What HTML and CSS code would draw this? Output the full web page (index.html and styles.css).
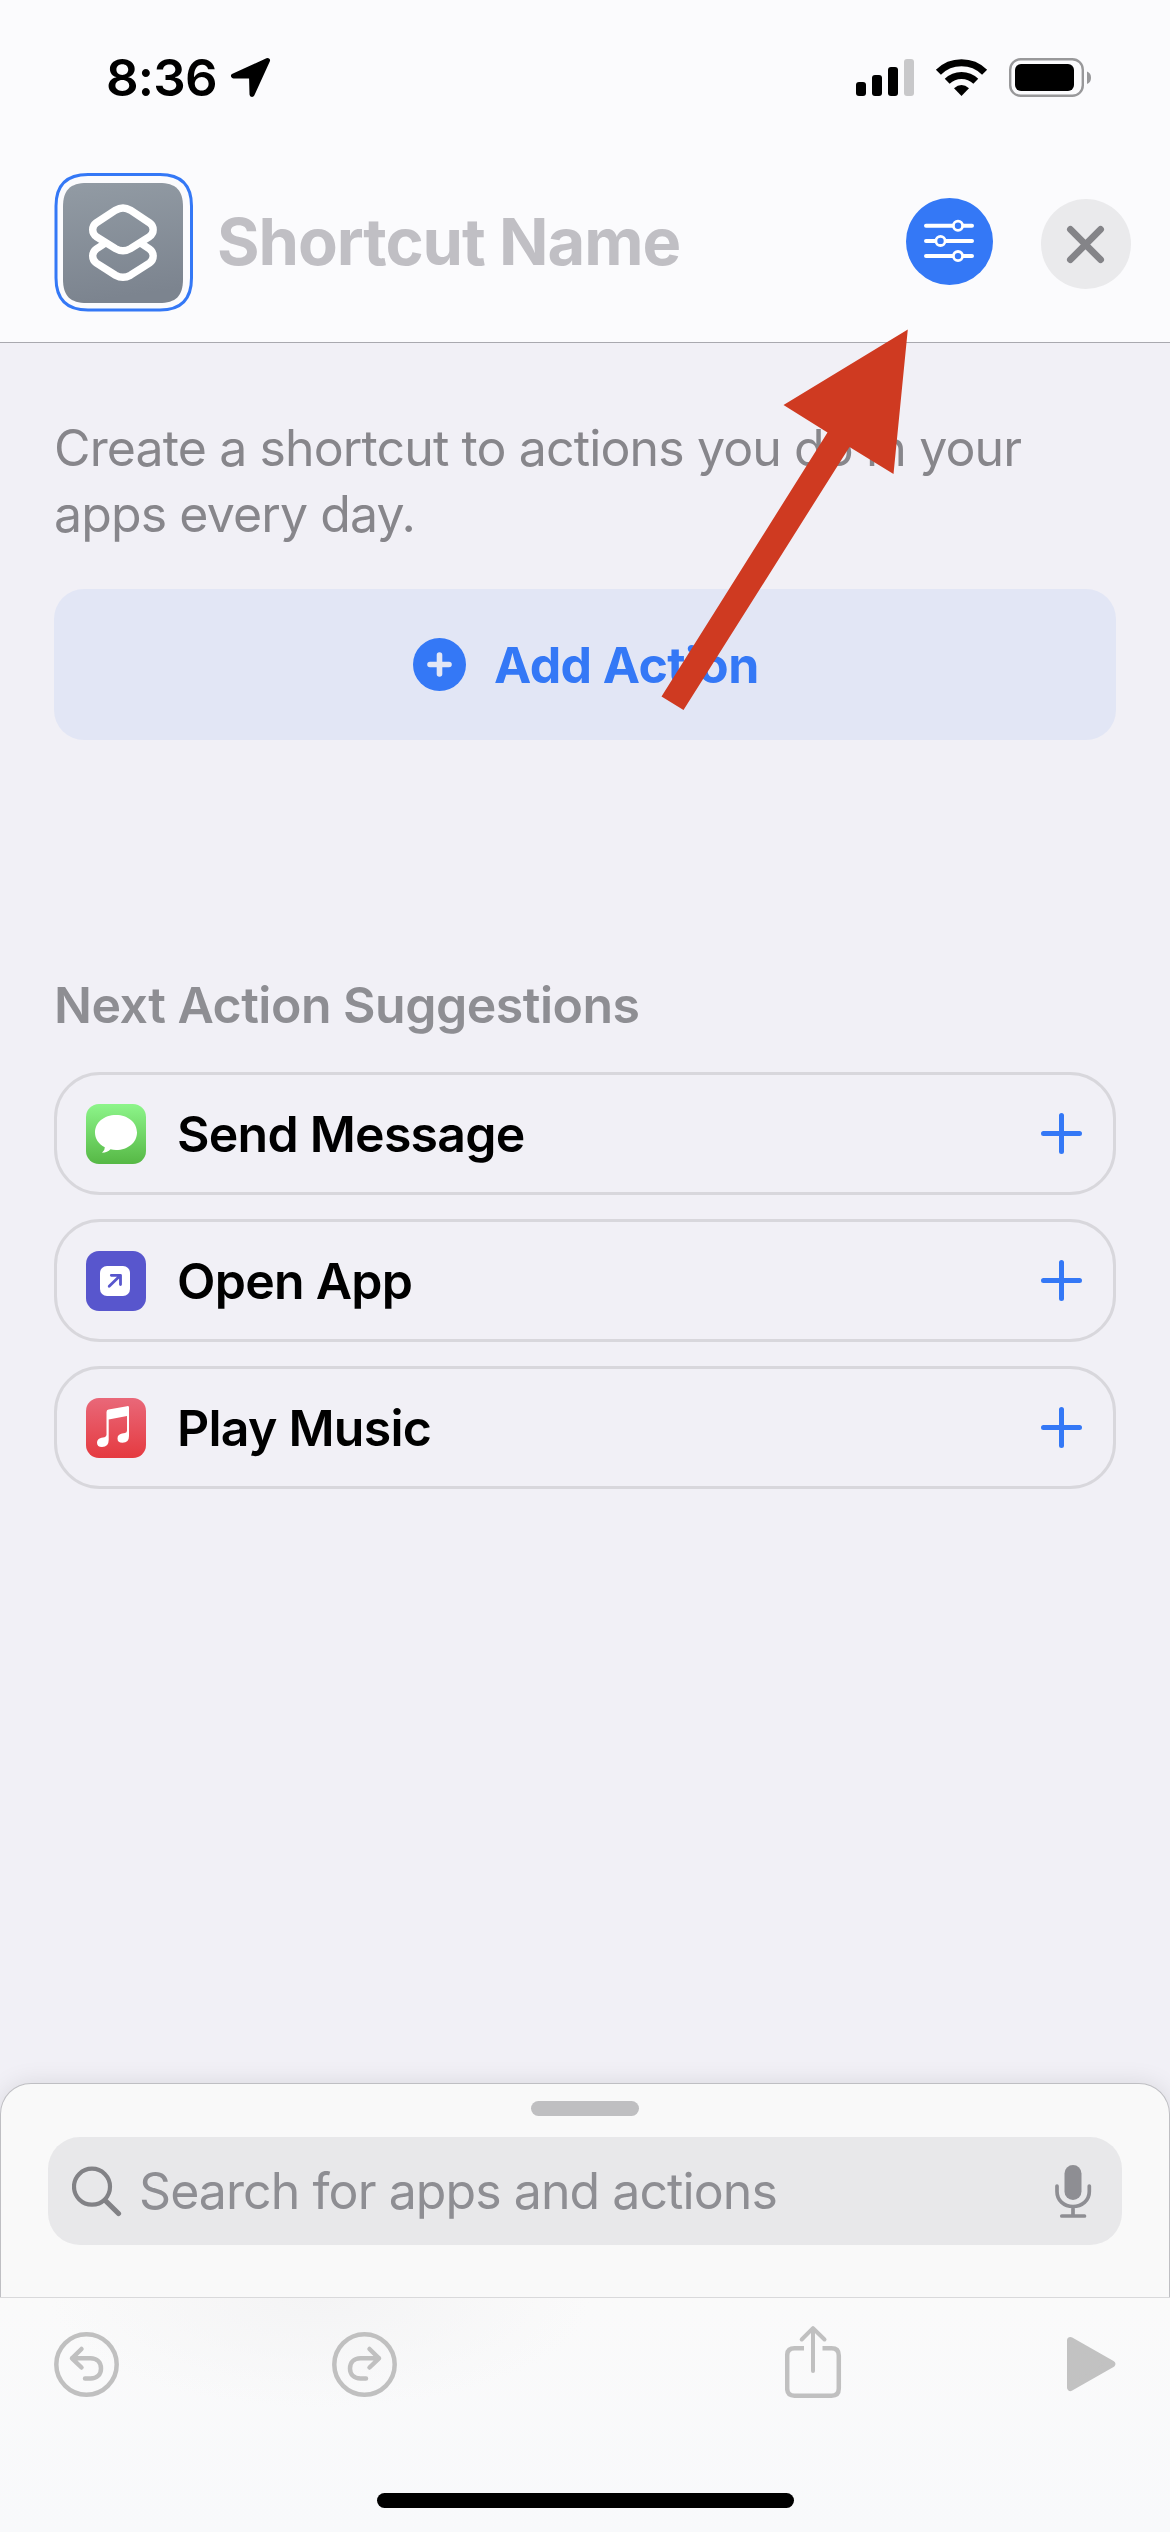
FILE: index.html
```html
<!DOCTYPE html>
<html lang="en">
<head>
<meta charset="utf-8">
<title>New Shortcut</title>
<link rel="stylesheet" href="styles.css">
</head>
<body>
<div class="screen">
  <header class="top">
    <div class="status">
      <span class="time">8:36</span>
      <svg class="location" viewBox="230 58 41 41" width="41" height="41"><path d="M267.5 61.5 L233.5 77 L251.5 77 L252 95.5 Z" fill="#000" stroke="#000" stroke-width="5" stroke-linejoin="round"/></svg>
      <svg class="indicators" viewBox="856 57 236 41" width="236" height="41">
        <g fill="#000"><rect x="856" y="82" width="10" height="14" rx="3"/><rect x="872" y="75" width="10" height="21" rx="3"/><rect x="888" y="67" width="10" height="29" rx="3"/></g>
        <rect x="904" y="59" width="10" height="37" rx="3" fill="#c8c8ca"/>
        <g fill="none" stroke="#000">
          <path d="M938.4 72.2 A33 33 0 0 1 984.6 72.2" stroke-width="7.2"/>
          <path d="M947.2 81.2 A20.5 20.5 0 0 1 975.8 81.2" stroke-width="7"/>
        </g>
        <path d="M954 88.3 Q961.5 81.5 969 88.3 L961.5 96 Z"/>
        <rect x="1010.2" y="59.2" width="72.6" height="36.6" rx="10.5" fill="none" stroke="#98989a" stroke-width="2.4"/>
        <rect x="1015" y="64" width="59" height="27" rx="6"/>
        <path d="M1087 71.5 Q1091 73 1091 77.7 Q1091 82.5 1087 84 Z" fill="#98989a"/>
      </svg>
    </div>
    <div class="title-row">
      <svg class="tile" viewBox="54 171 140 140" width="140" height="140">
        <defs><linearGradient id="steel" x1="0" y1="0" x2=".15" y2="1"><stop offset="0" stop-color="#929ba4"/><stop offset="1" stop-color="#7c848f"/></linearGradient></defs>
        <path d="M88 173.5 H160 C181 173.5 191.5 184 191.5 205 V277 C191.5 298.500 181 309 160 309 H88 C66.500 309 56 298.500 56 277 V205 C56 184 66.500 173.500 88 173.500 Z" fill="none" stroke="#3478f6" stroke-width="3"/>
        <path d="M87 182 H159 C176 182 183 189 183 206 V278 C183 295 176 302 159 302 H87 C70 302 63 295 63 278 V206 C63 189 70 182 87 182 Z" fill="url(#steel)"/>
        <g fill="none" stroke="#fff" stroke-width="7.4">
          <path d="M115.5 209.2 Q123 204.8 130.5 209.2 L149.5 221.8 C154.4 225.5 154.4 232 149.5 235.6 L130.5 247.6 Q123 252 115.5 247.600 L96.300 235.600 C91.500 232 91.500 225.500 96.300 221.800 Z"/>
          <path d="M105.500 242 L96.300 248 C91.500 251.500 91.500 258.500 96.300 262 L115.500 274.200 Q123 278.400 130.500 274.200 L149.500 262 C154.400 258.500 154.400 251.500 149.500 248 L140.500 242"/>
        </g>
      </svg>
      <span class="name">Shortcut Name</span>
      <svg class="settings" viewBox="906 198 87 87" width="87" height="87">
        <circle cx="949.5" cy="241.5" r="43.5" fill="#3478f6"/>
        <g fill="#3478f6" stroke="#fff" stroke-linecap="round">
          <path d="M926 225.7H972M926 240.9H972M926 256.1H972" stroke-width="4"/>
          <g stroke-width="2.8"><circle cx="958" cy="225.7" r="4.6"/><circle cx="940.5" cy="240.9" r="4.6"/><circle cx="958" cy="256.1" r="4.6"/></g>
        </g>
      </svg>
      <svg class="close" viewBox="1041 199 90 90" width="90" height="90">
        <circle cx="1086" cy="244" r="45" fill="#eaeaec"/>
        <path d="M1070.4 229.3L1100.6 259.7M1100.6 229.3L1070.4 259.7" stroke="#848488" stroke-width="6.8" stroke-linecap="round"/>
      </svg>
    </div>
  </header>

  <main class="content">
    <p class="intro">Create a shortcut to actions you do in your apps every day.</p>
    <div class="add">
      <svg viewBox="413 638 53 53" width="53" height="53"><circle cx="439.5" cy="664.5" r="26.5" fill="#3478f6"/><path d="M430 664.5H449M439.5 655V674" stroke="#e2e6f5" stroke-width="5.6" stroke-linecap="round"/></svg>
      <span class="add-label">Add Action</span>
    </div>
    <h2 class="heading">Next Action Suggestions</h2>
    <div class="list">
      <div class="item">
        <svg viewBox="0 0 60 60" width="60" height="60">
          <defs><linearGradient id="green" x1="0" y1="0" x2="0" y2="1"><stop offset="0" stop-color="#8df58a"/><stop offset="1" stop-color="#56b845"/></linearGradient></defs>
          <rect width="60" height="60" rx="13" fill="url(#green)"/>
          <path d="M30 11 C42 11 51 18.5 51 28.5 C51 38.5 42 46 30 46 Q27 46 24.5 45.3 Q21.5 48.5 16 48.8 Q19 46.5 18.8 43.3 C12.5 40 9 34.5 9 28.5 C9 18.5 18 11 30 11 Z" fill="#fff"/>
        </svg>
        <span class="label">Send Message</span>
        <svg class="plus" viewBox="0 0 41 41" width="41" height="41"><path d="M2.5 20.5H38.5M20.5 2.5V38.5"/></svg>
      </div>
      <div class="item">
        <svg viewBox="0 0 60 60" width="60" height="60">
          <rect width="60" height="60" rx="13" fill="#5856cd"/>
          <rect x="14" y="15" width="30" height="30" rx="7" fill="#fff"/>
          <path d="M23.2 35.3L34 24.8M25.3 24.3H34.5V33.5" fill="none" stroke="#5856cd" stroke-width="2.8" stroke-linecap="round" stroke-linejoin="round"/>
        </svg>
        <span class="label">Open App</span>
        <svg class="plus" viewBox="0 0 41 41" width="41" height="41"><path d="M2.5 20.5H38.5M20.5 2.5V38.5"/></svg>
      </div>
      <div class="item">
        <svg viewBox="0 0 60 60" width="60" height="60">
          <defs><linearGradient id="red" x1="0" y1="0" x2="0" y2="1"><stop offset="0" stop-color="#e96879"/><stop offset="1" stop-color="#e53a40"/></linearGradient></defs>
          <rect width="60" height="60" rx="13" fill="url(#red)"/>
          <path fill-rule="evenodd" d="M20.5 14 Q20.5 12 22.5 11.6 L41 8.2 Q43 7.8 43 9.5 V38 Q43 44.8 36.5 44.8 Q31.5 44.8 31.5 40.5 Q31.5 36.5 36 35.6 L39 35 Q41 34.5 41 32.5 V18 L22.7 21.5 V42 Q22.7 49 16 49 Q11 49 11 44.8 Q11 40.8 15.5 39.8 L18.5 39.2 Q20.5 38.8 20.5 36.8 Z" fill="#fff"/>
        </svg>
        <span class="label">Play Music</span>
        <svg class="plus" viewBox="0 0 41 41" width="41" height="41"><path d="M2.5 20.5H38.5M20.5 2.5V38.5"/></svg>
      </div>
    </div>
  </main>

  <section class="sheet">
    <div class="grabber"></div>
    <div class="search">
      <svg viewBox="72 2166 50 51" width="50" height="51"><g fill="none" stroke="#828286" stroke-linecap="round"><circle cx="92" cy="2186.7" r="18" stroke-width="4.2"/><path d="M105.8 2201L118.5 2213.5" stroke-width="5.2"/></g></svg>
      <span class="placeholder">Search for apps and actions</span>
      <svg class="mic" viewBox="1054 2164 38 55" width="38" height="55"><rect x="1064.5" y="2165" width="17" height="35" rx="8.5" fill="#8e8e93"/><path d="M1057 2186V2191.5C1057 2200.5 1064 2206.5 1073 2206.5S1089.3 2200.5 1089.3 2191.5V2186M1073 2206.5V2216M1061.8 2216H1084.5" fill="none" stroke="#8e8e93" stroke-width="3.7" stroke-linecap="round"/></svg>
    </div>
  </section>

  <footer class="toolbar">
    <svg class="undo" viewBox="0 0 65 65" width="65" height="65"><g class="line"><circle cx="32.5" cy="32.5" r="30.2"/><path d="M27.5 17L18 26.3L27.5 35.5M18 26.3H36.5C43 26.3 47 30.5 47 36.5S43 46.5 36.5 46.5H31"/></g></svg>
    <svg class="redo" viewBox="0 0 65 65" width="65" height="65"><g class="line" transform="matrix(-1 0 0 1 65 0)"><circle cx="32.5" cy="32.5" r="30.2"/><path d="M27.5 17L18 26.3L27.5 35.5M18 26.3H36.5C43 26.3 47 30.5 47 36.5S43 46.5 36.5 46.5H31"/></g></svg>
    <svg class="share" viewBox="785 2325 57 73" width="57" height="73"><g class="line"><path stroke-linecap="butt" d="M804 2348.3H794.5Q787.2 2348.3 787.2 2355.5V2388.5Q787.2 2395.7 794.5 2395.7H831.5Q838.8 2395.7 838.8 2388.5V2355.5Q838.8 2348.3 831.5 2348.3H822.5"/><path stroke-width="4" d="M813 2371V2328.5M801.7 2339.5L813 2328.2L824.5 2339.5"/></g></svg>
    <svg class="play" viewBox="1067 2336 49 56" width="49" height="56"><path d="M1070.5 2340.5L1111.8 2364L1070.5 2387.5Z" fill="#c2c2c2" stroke="#c2c2c2" stroke-width="7" stroke-linejoin="round"/></svg>
  </footer>

  <div class="home"></div>
  <svg class="pointer" viewBox="0 0 248 382" width="248" height="382"><path d="M246.8 .5L232.5 145L188.5 118L22.5 381L.5 367.5L166.5 103.5L122.5 76Z" fill="#cf3a21"/></svg>
</div>
</body>
</html>
```
FILE: styles.css
```css
* { box-sizing: border-box; }
body { margin: 0; font-family: Inter, "Liberation Sans", sans-serif; }
svg { display: block; flex: none; }
.screen { position: relative; display: flex; flex-direction: column; width: 1170px; height: 2532px; overflow: hidden; background: #f1f0f6; }

.top { height: 343px; flex: none; background: #fbfbfd; border-bottom: 1px solid #a9a9af; }
.status { display: flex; align-items: center; height: 155px; padding: 0 78px 0 106px; }
.time { width: 111px; font-size: 51px; font-weight: 600; line-height: 60px; letter-spacing: -0.79px; white-space: nowrap; }
.location { margin-left: 13px; }
.indicators { margin-left: auto; }
.title-row { display: flex; align-items: center; height: 173px; padding: 0 39px 0 54px; }
.name { margin-left: 23px; font-size: 65px; font-weight: 700; line-height: 80px; letter-spacing: -1.07px; color: #c0bfc4; }
.settings { margin-left: auto; }
.close { margin: 5px 0 0 48px; }

.content { padding: 72px 54px 0; }
.intro { margin: 0; font-size: 50px; line-height: 66px; letter-spacing: -0.88px; color: #87868b; }
.add { display: flex; align-items: center; gap: 28px; height: 151px; margin-top: 42px; padding-left: 359px; border-radius: 30px; background: #e2e6f5; }
.add-label { font-size: 50px; font-weight: 700; line-height: 60px; letter-spacing: -0.55px; color: #3478f6; }
.heading { margin: 235px 0 37px; font-size: 50px; font-weight: 600; line-height: 60px; letter-spacing: -0.5px; color: #8e8e93; }
.list { display: flex; flex-direction: column; gap: 24px; }
.item { display: flex; align-items: center; height: 123px; padding: 0 31px 0 29px; border: 3px solid #d8d7dc; border-radius: 46px; }
.label { margin-left: 31px; font-size: 50px; font-weight: 600; line-height: 60px; letter-spacing: -0.75px; color: #000; }
.plus { margin-left: auto; fill: none; stroke: #3478f6; stroke-width: 5; stroke-linecap: round; }

.sheet { flex: none; height: 214px; margin-top: auto; padding: 17px 47px 0; border: 1px solid #bfbfc3; border-bottom: 0; border-radius: 31px 31px 0 0; background: #f9f9f9; box-shadow: 0 0 24px rgba(0, 0, 0, .1); }
.grabber { width: 108px; height: 15px; margin: 0 auto 21px; border-radius: 7.5px; background: #bfbfc1; }
.search { display: flex; align-items: center; height: 108px; padding: 0 30px 0 24px; border-radius: 32px; background: #e8e8ea; }
.placeholder { margin-left: 17px; font-size: 50px; line-height: 60px; letter-spacing: -0.93px; color: #8e8e93; }
.mic { margin-left: auto; }

.toolbar { position: relative; display: flex; align-items: flex-start; flex: none; height: 235px; padding: 34px 54px 0; border-top: 1px solid #d9d9db; background: radial-gradient(ellipse 270px 110px at 320px 0, #f4f4f5, rgba(244, 244, 245, 0)), linear-gradient(#fafafa, #f8f9fb); }
.line { fill: none; stroke: #c0c0c0; stroke-width: 4.5; stroke-linecap: round; stroke-linejoin: round; }
.redo { margin-left: 213px; }
.share { margin: -7px 0 0 388px; }
.play { margin: 4px 0 0 auto; }

.home { position: absolute; left: 377px; bottom: 24px; width: 417px; height: 15px; border-radius: 7.5px; background: #000; }
.pointer { position: absolute; left: 661px; top: 329px; }
```
